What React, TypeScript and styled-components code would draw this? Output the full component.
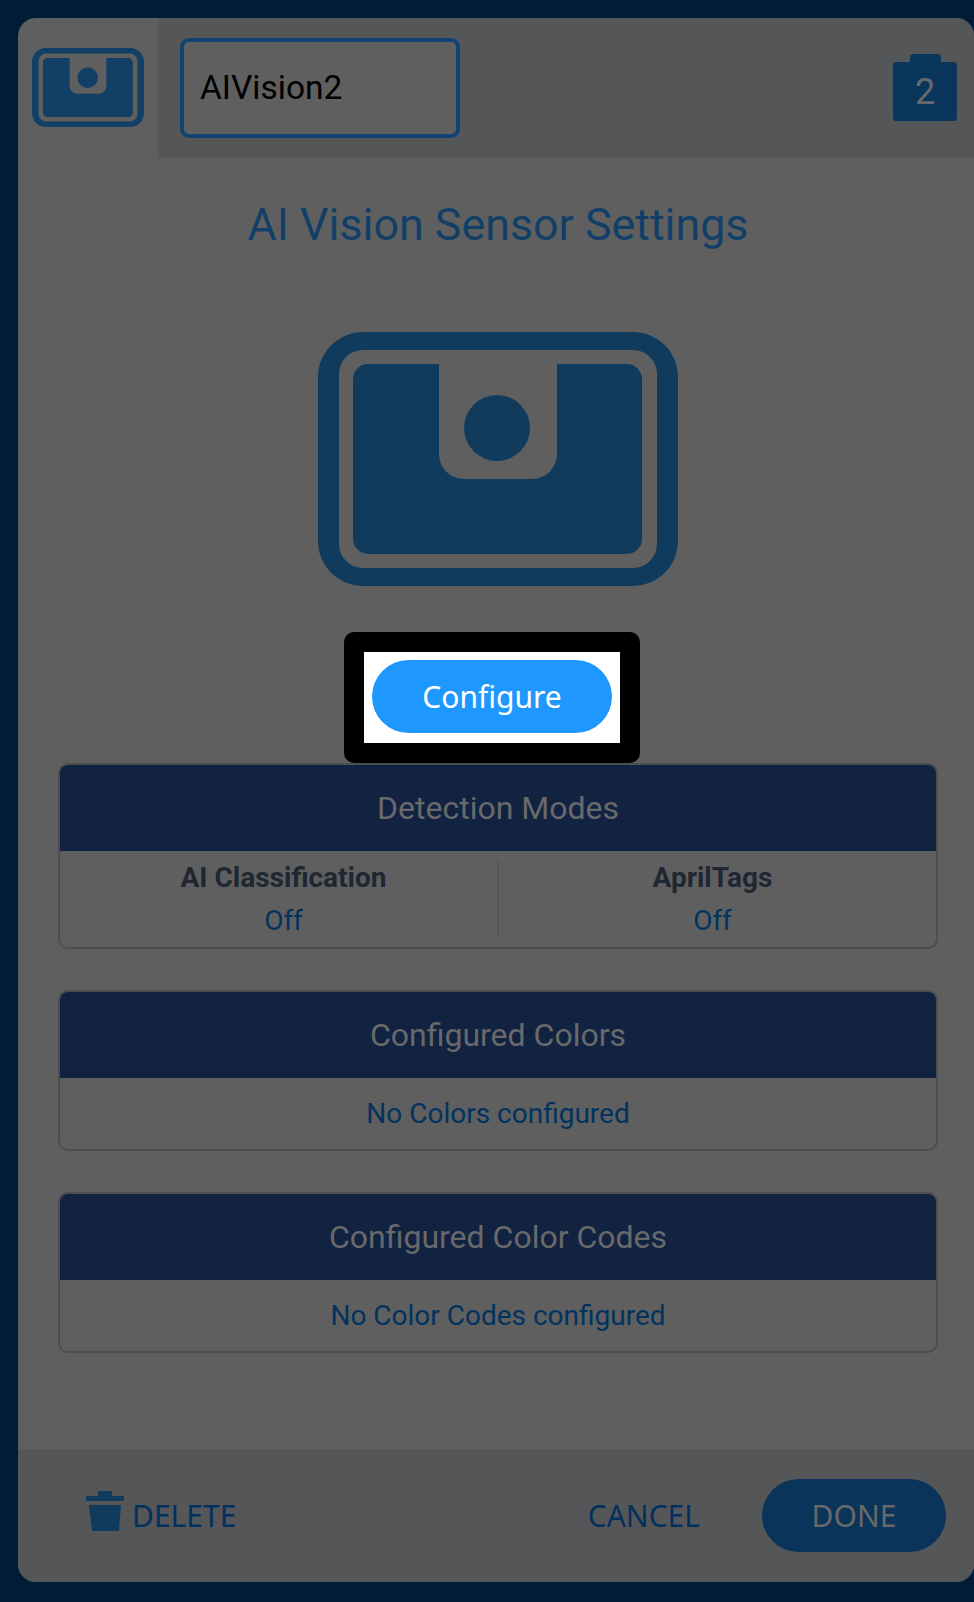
import React from 'react';
import styled, { createGlobalStyle } from 'styled-components';

const GlobalStyle = createGlobalStyle`
  html, body {
    margin: 0;
    padding: 0;
    height: 1602px;
    overflow: hidden;
    background: #001c36;
    font-family: 'Roboto', sans-serif;
  }
`;

const Page = styled.div`
  box-sizing: border-box;
  width: 974px;
  height: 1602px;
  padding: 18px 0 20px 18px;
`;

const Card = styled.div`
  display: flex;
  flex-direction: column;
  height: 100%;
  background: #5f5f5f;
  border-radius: 18px;
  overflow: hidden;
`;

const Header = styled.div`
  display: flex;
  flex: 0 0 140px;
`;

const IconCell = styled.div`
  flex: 0 0 140px;
  box-sizing: border-box;
  padding: 30px 0 0 14px;
`;

const HeaderBar = styled.div`
  flex: 1;
  display: flex;
  align-items: flex-start;
  justify-content: space-between;
  background: #555658;
  padding: 20px 17px 0 22px;
`;

const NameInput = styled.div`
  box-sizing: border-box;
  width: 280px;
  height: 100px;
  padding: 0 16px;
  border: 4px solid #0f4472;
  border-radius: 9px;
  background: #5f5f5f;
  color: #000;
  font-size: 33.5px;
  line-height: 92px;
`;

const PortBadge = styled.div`
  position: relative;
  display: flex;
  align-items: center;
  justify-content: center;
  width: 64px;
  height: 59px;
  margin-top: 24px;
  background: #0b365c;
  border-radius: 3px;
  color: #68696b;
  font-size: 36px;

  &::before {
    content: '';
    position: absolute;
    top: -8px;
    left: 17px;
    width: 31px;
    height: 9px;
    background: #0b365c;
    border-radius: 3px 3px 0 0;
  }
`;

const Body = styled.div`
  flex: 1;
  display: flex;
  flex-direction: column;
  align-items: center;
  padding: 0 36px 0 40px;
`;

const Title = styled.h1`
  margin: 41px 0 0;
  color: #113f68;
  font-size: 44.8px;
  font-weight: 400;
  line-height: 52px;
`;

const BigIcon = styled.svg`
  display: block;
  width: 360px;
  height: 254px;
  margin-top: 81px;
  fill: #113b5c;
`;

const SmallIcon = styled.svg`
  display: block;
  width: 112px;
  height: 79px;
  fill: #113f66;
`;

const Spotlight = styled.div`
  box-sizing: border-box;
  width: 296px;
  height: 131px;
  margin: 46px 12px 0 0;
  padding: 8px;
  border: 20px solid #000;
  border-radius: 10px;
  background: #fff;
  background-clip: padding-box;
`;

const ConfigureButton = styled.button`
  display: block;
  width: 240px;
  height: 73px;
  padding: 0;
  border: 0;
  border-radius: 37px;
  background: #1e98ff;
  color: #fff;
  font-family: 'Noto Sans', sans-serif;
  font-size: 30px;
`;

const Panels = styled.div`
  align-self: stretch;
  display: flex;
  flex-direction: column;
  gap: 41px;
`;

const Panel = styled.section`
  border: 2px solid #4e4e4f;
  border-radius: 10px;
  overflow: hidden;
`;

const PanelTitle = styled.div`
  height: 86px;
  background: #122341;
  color: #68696b;
  font-size: 32px;
  line-height: 86px;
  text-align: center;
`;

const ModeRow = styled.div`
  display: flex;
  height: 96px;
  align-items: center;
`;

const ModeCell = styled.div<{ $side: 'left' | 'right' }>`
  flex: 1;
  box-sizing: border-box;
  height: 76px;
  text-align: center;
  padding: ${({ $side }) => ($side === 'left' ? '0 0 0 10px' : '0 10px 0 0')};
  border-right: ${({ $side }) => ($side === 'left' ? '2px solid #565657' : '0')};
`;

const ModeName = styled.div`
  color: #1f2733;
  font-size: 28px;
  font-weight: 700;
  line-height: 34px;
`;

const ModeValue = styled.div`
  margin-top: 9px;
  color: #02335f;
  font-size: 28px;
  line-height: 34px;
`;

const EmptyText = styled.div`
  height: 71px;
  color: #02335f;
  font-size: 28px;
  line-height: 71px;
  text-align: center;
`;

const Footer = styled.div`
  flex: 0 0 133px;
  box-sizing: border-box;
  display: flex;
  align-items: flex-start;
  background: #555658;
  padding: 30px 28px 0 68px;
  font-family: 'Noto Sans', sans-serif;
  font-size: 30px;
`;

const DeleteAction = styled.div`
  display: flex;
  align-items: flex-start;
  gap: 8px;
  margin-top: 12px;
  height: 40px;
  color: #03305c;
  line-height: 50px;
`;

const TrashIcon = styled.svg`
  display: block;
  width: 38px;
  height: 40px;
  fill: #113b5c;
`;

const CancelAction = styled.div`
  margin: 0 62px 0 auto;
  color: #03305c;
  line-height: 73px;
`;

const DoneButton = styled.div`
  width: 184px;
  height: 73px;
  border-radius: 37px;
  background: #0a345a;
  color: #68696b;
  line-height: 73px;
  text-align: center;
`;

const sensorPath =
  'M45 0H315A45 45 0 0 1 360 45V209A45 45 0 0 1 315 254H45A45 45 0 0 1 0 209V45A45 45 0 0 1 45 0Z' +
  'M45 18A24 24 0 0 0 21 42V212A24 24 0 0 0 45 236H315A24 24 0 0 0 339 212V42A24 24 0 0 0 315 18Z' +
  'M50 32A15 15 0 0 0 35 47V207A15 15 0 0 0 50 222H309A15 15 0 0 0 324 207V47A15 15 0 0 0 309 32H239V122A25 25 0 0 1 214 147H146A25 25 0 0 1 121 122V32Z';

const SensorGlyph = () => (
  <>
    <path fillRule="evenodd" d={sensorPath} />
    <circle cx="179" cy="96" r="33" />
  </>
);

const App = () => (
  <Page>
    <GlobalStyle />
    <Card>
      <Header>
        <IconCell>
          <SmallIcon viewBox="0 0 360 254">
            <SensorGlyph />
          </SmallIcon>
        </IconCell>
        <HeaderBar>
          <NameInput>AIVision2</NameInput>
          <PortBadge>2</PortBadge>
        </HeaderBar>
      </Header>
      <Body>
        <Title>AI Vision Sensor Settings</Title>
        <BigIcon viewBox="0 0 360 254">
          <SensorGlyph />
        </BigIcon>
        <Spotlight>
          <ConfigureButton>Configure</ConfigureButton>
        </Spotlight>
        <Panels>
          <Panel>
            <PanelTitle>Detection Modes</PanelTitle>
            <ModeRow>
              <ModeCell $side="left">
                <ModeName>AI Classification</ModeName>
                <ModeValue>Off</ModeValue>
              </ModeCell>
              <ModeCell $side="right">
                <ModeName>AprilTags</ModeName>
                <ModeValue>Off</ModeValue>
              </ModeCell>
            </ModeRow>
          </Panel>
          <Panel>
            <PanelTitle>Configured Colors</PanelTitle>
            <EmptyText>No Colors configured</EmptyText>
          </Panel>
          <Panel>
            <PanelTitle>Configured Color Codes</PanelTitle>
            <EmptyText>No Color Codes configured</EmptyText>
          </Panel>
        </Panels>
      </Body>
      <Footer>
        <DeleteAction>
          <TrashIcon viewBox="0 0 38 40">
            <path d="M12 0H26V5H38V10H0V5H12ZM3 14H35L33 40H6Z" />
          </TrashIcon>
          DELETE
        </DeleteAction>
        <CancelAction>CANCEL</CancelAction>
        <DoneButton>DONE</DoneButton>
      </Footer>
    </Card>
  </Page>
);

export default App;
